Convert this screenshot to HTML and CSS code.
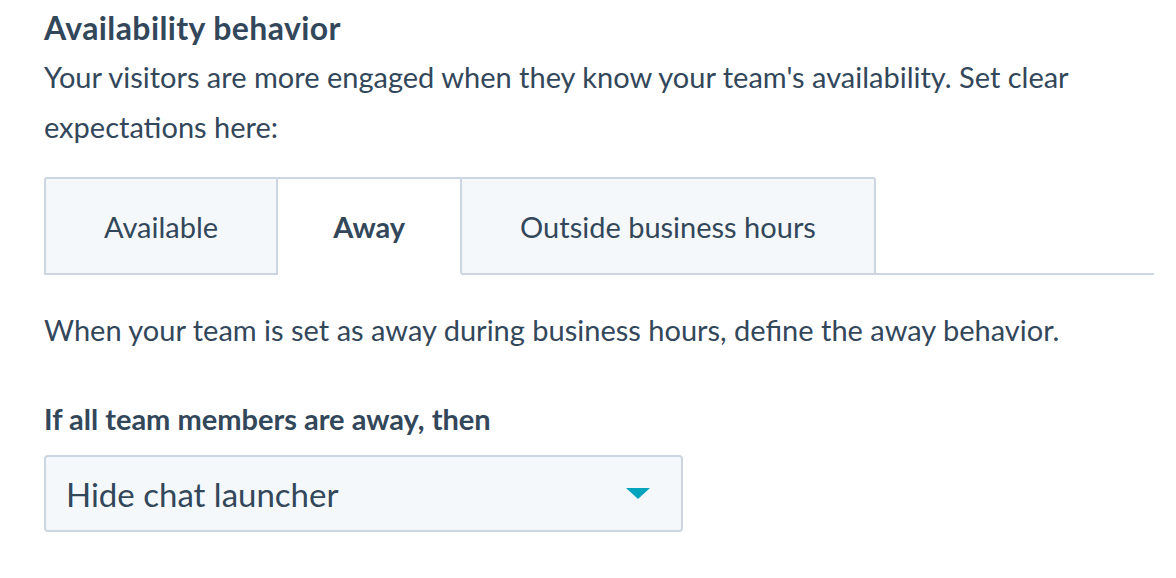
FILE: index.html
```html
<!DOCTYPE html>
<html>
<head>
<meta charset="utf-8">
<link rel="stylesheet" href="styles.css">
</head>
<body>
<main class="page">
  <h2 class="title">Availability behavior</h2>
  <p class="intro">Your visitors are more engaged when they know your team's availability. Set clear expectations here:</p>
  <div class="tabs">
    <div class="tab">Available</div>
    <div class="tab tab-active">Away</div>
    <div class="tab">Outside business hours</div>
    <div class="tab-rest"></div>
  </div>
  <p class="desc">When your team is set as away during business hours, define the away behavior.</p>
  <div class="field">
    <label class="label">If all team members are away, then</label>
    <div class="select">
      <span class="select-value">Hide chat launcher</span>
      <svg class="caret" width="24" height="11" viewBox="0 0 24 11"><path d="M0 0H24L12 11Z" fill="#00a4bd"/></svg>
    </div>
  </div>
</main>
</body>
</html>
```
FILE: styles.css
```css
html, body {
  margin: 0;
  padding: 0;
  background: #ffffff;
}
body {
  font-family: "Lato", "Noto Sans", sans-serif;
  color: #33475b;
}
.page {
  padding: 8px 22px 0 44px;
}
.title {
  margin: 0;
  font-size: 32px;
  font-weight: 700;
  line-height: 40px;
  letter-spacing: 0.4px;
}
.intro {
  margin: 4px 0 0;
  font-size: 29px;
  line-height: 50px;
}
.tabs {
  display: flex;
  margin-top: 25px;
  height: 98px;
}
.tab {
  box-sizing: border-box;
  display: flex;
  align-items: center;
  justify-content: center;
  padding: 0 58px;
  background: #f5f8fa;
  border: 2px solid #cbd6e2;
  border-left-width: 0;
  font-size: 29px;
}
.tab:first-child {
  border-left-width: 2px;
  border-top-left-radius: 3px;
}
.tab:nth-child(3) {
  border-top-right-radius: 3px;
}
.tab-active {
  padding: 0 55px;
  background: #ffffff;
  border-bottom-color: #ffffff;
  font-weight: 700;
}
.tab-rest {
  flex: 1;
  border-bottom: 2px solid #cbd6e2;
}
.desc {
  margin: 33px 0 0;
  font-size: 29px;
  line-height: 44px;
}
.field {
  margin-top: 47px;
}
.label {
  display: block;
  font-size: 29px;
  font-weight: 700;
  line-height: 40px;
}
.select {
  box-sizing: border-box;
  width: 639px;
  height: 77px;
  margin-top: 16px;
  display: flex;
  align-items: center;
  justify-content: space-between;
  padding: 0 31px 0 20px;
  background: #f5f8fa;
  border: 2px solid #cbd6e2;
  border-radius: 4px;
}
.select-value {
  font-size: 33px;
}
.caret {
  display: block;
}
```
